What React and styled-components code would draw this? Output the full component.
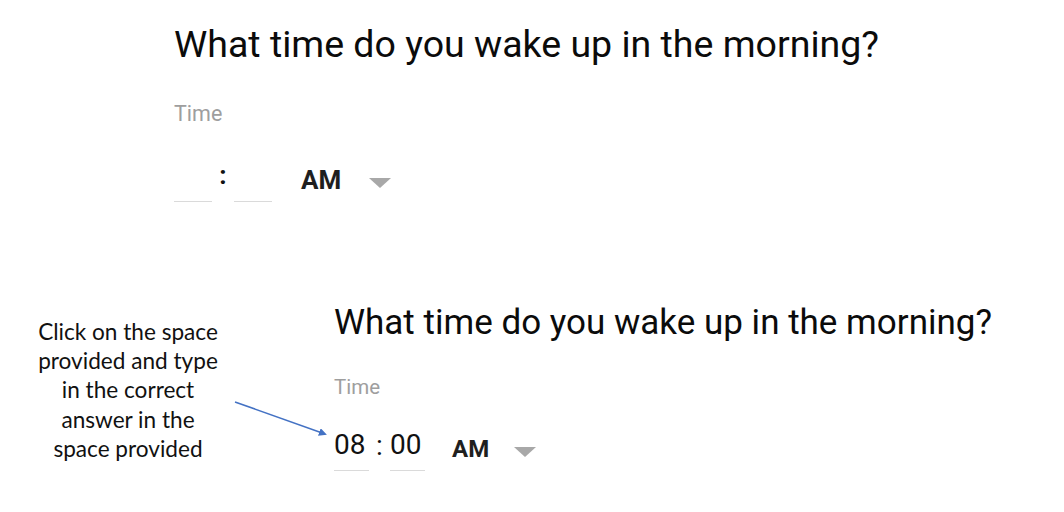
import React from "react";
import styled, { createGlobalStyle } from "styled-components";

const GlobalStyle = createGlobalStyle`
  html, body {
    margin: 0;
    padding: 0;
    background: #ffffff;
  }
  body {
    width: 1064px;
    height: 512px;
    overflow: hidden;
    font-family: Roboto, "Liberation Sans", sans-serif;
  }
`;

const Page = styled.div`
  display: flex;
  flex-direction: column;
  padding-top: 22px;
`;

const Question = styled.div`
  display: flex;
  flex-direction: column;
  margin-left: ${({ left }) => left}px;
`;

const Title = styled.h2`
  margin: 0;
  font-family: Roboto, "Liberation Sans", sans-serif;
  font-weight: 400;
  font-size: ${({ size }) => size}px;
  line-height: 1.2;
  color: #0b0b0b;
  white-space: nowrap;
`;

const Label = styled.div`
  font-size: ${({ size }) => size}px;
  color: #9e9e9e;
  line-height: 1.2;
  margin-top: ${({ gap }) => gap}px;
`;

const TimeRow = styled.div`
  display: flex;
  align-items: flex-end;
  margin-top: ${({ gap }) => gap}px;
`;

const Field = styled.input`
  width: ${({ w }) => w}px;
  box-sizing: border-box;
  border: none;
  border-bottom: 1px solid #dadada;
  outline: none;
  background: transparent;
  padding: 0 0 ${({ pad }) => pad}px;
  margin: 0;
  font-family: Roboto, "Liberation Sans", sans-serif;
  font-size: ${({ size }) => size}px;
  line-height: 1;
  color: #111;
`;

const Colon = styled.span`
  font-size: ${({ size }) => size}px;
  line-height: 1;
  color: #111;
  font-weight: ${({ bold }) => (bold ? 700 : 400)};
  width: ${({ w }) => w}px;
  text-align: center;
  padding-bottom: ${({ pad }) => pad}px;
`;

const Period = styled.span`
  font-size: ${({ size }) => size}px;
  font-weight: 700;
  line-height: 1;
  color: #1f1f1f;
  margin-left: ${({ gap }) => gap}px;
  padding-bottom: ${({ pad }) => pad}px;
`;

const Caret = styled.span`
  width: 0;
  height: 0;
  border-left: 11px solid transparent;
  border-right: 11px solid transparent;
  border-top: 10px solid #a8a8a8;
  margin-left: ${({ gap }) => gap}px;
  margin-bottom: ${({ pad }) => pad}px;
`;

const Annotated = styled.div`
  display: flex;
  align-items: flex-start;
  margin-top: ${({ gap }) => gap}px;
`;

const Callout = styled.div`
  width: 188px;
  margin-left: 34px;
  margin-top: 15px;
  font-family: Lato, "Open Sans", sans-serif;
  font-size: 22.6px;
  line-height: 29.3px;
  text-align: center;
  color: #111;
`;

const Pointer = styled.svg`
  width: 100px;
  height: 44px;
  margin-top: 94px;
  margin-left: 11px;
  flex-shrink: 0;
`;

const TimeQuestion = ({ left, big, hour, minute }) => (
  <Question left={left}>
    <Title size={big ? 37.5 : 35}>What time do you wake up in the morning?</Title>
    <Label size={big ? 21.5 : 20.5} gap={big ? 34 : 31}>Time</Label>
    <TimeRow gap={big ? 32 : 29}>
      <Field w={big ? 38 : 35} size={28} pad={9} defaultValue={hour} />
      <Colon size={big ? 26 : 28} w={big ? 22 : 21} pad={big ? 14 : 11} bold={big}>:</Colon>
      <Field w={big ? 38 : 35} size={28} pad={9} defaultValue={minute} />
      <Period size={big ? 26 : 24} gap={big ? 29 : 27} pad={big ? 9 : 10}>AM</Period>
      <Caret gap={big ? 28 : 25} pad={big ? 14 : 14} />
    </TimeRow>
  </Question>
);

export default function App() {
  return (
    <>
      <GlobalStyle />
      <Page>
        <TimeQuestion left={174} big hour="" minute="" />
        <Annotated gap={100}>
          <Callout>
            Click on the space provided and type in the correct answer in the
            space provided
          </Callout>
          <Pointer viewBox="0 0 100 44">
            <defs>
              <marker id="head" markerWidth="8" markerHeight="8" refX="6" refY="4" orient="auto" markerUnits="userSpaceOnUse">
                <path d="M0,0 L8,4 L0,8 z" fill="#4472c4" />
              </marker>
            </defs>
            <line x1="2" y1="6" x2="92" y2="38" stroke="#4472c4" strokeWidth="1.6" markerEnd="url(#head)" />
          </Pointer>
          <TimeQuestion left={1} hour="08" minute="00" />
        </Annotated>
      </Page>
    </>
  );
}
